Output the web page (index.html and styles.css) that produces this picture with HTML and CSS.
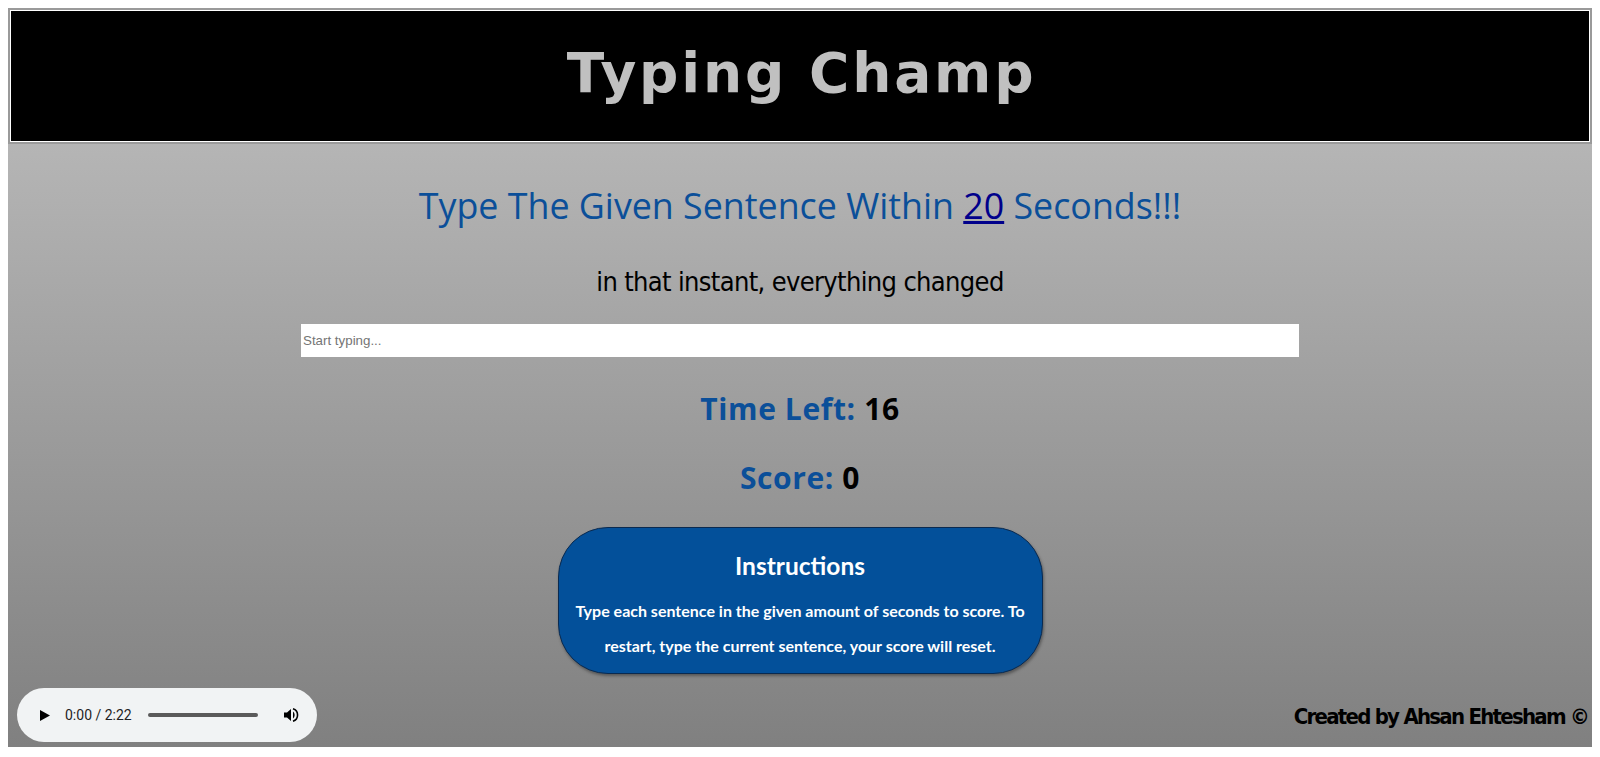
FILE: index.html
```html
<!DOCTYPE html>
<html lang="en">
<head>
<meta charset="utf-8">
<title>Typing Champ</title>
<link rel="stylesheet" href="styles.css">
</head>
<body>
<header class="top">
  <h1 class="brand">Typing Champ</h1>
</header>
<main class="stage">
  <h2 class="prompt">Type The Given Sentence Within <span class="secs">20</span> Seconds!!!</h2>
  <p class="sentence">in that instant, everything changed</p>
  <input class="entry" type="text" placeholder="Start typing...">
  <p class="stat stat-time"><span class="label">Time Left:</span> <span class="val">16</span></p>
  <p class="stat stat-score"><span class="label">Score:</span> <span class="val">0</span></p>
  <section class="instructions">
    <h3 class="ins-title">Instructions</h3>
    <p class="ins-text">Type each sentence in the given amount of seconds to score. To restart, type the current sentence, your score will reset.</p>
  </section>
  <div class="bottom">
    <div class="player">
      <svg class="play" width="10" height="11" viewBox="0 0 10 11"><path d="M0 0 L10 5.5 L0 11 Z" fill="#000"/></svg>
      <span class="time">0:00 / 2:22</span>
      <span class="track"></span>
      <svg class="vol" width="16" height="16" viewBox="0 0 16 16"><path d="M1 5.5 H4 L8 2 V14 L4 10.5 H1 Z" fill="#000"/><path d="M10 4.5 A4.5 4.5 0 0 1 10 11.5 Z" fill="#000"/><path d="M10 1.8 A6.5 6.5 0 0 1 10 14.2" fill="none" stroke="#000" stroke-width="1.6"/></svg>
    </div>
    <p class="credit">Created by Ahsan Ehtesham ©</p>
  </div>
</main>
</body>
</html>
```
FILE: styles.css
```css
html, body {
  margin: 0;
  padding: 0;
  background: #fff;
}
body {
  padding: 8px 8px 10px;
}
.top {
  height: 132px;
  border: 2px solid #9a9a9a;
  box-shadow: inset 0 0 0 1px #fff;
  background: #000;
  display: flex;
  align-items: center;
  justify-content: center;
}
.brand {
  margin: 0;
  font-family: "DejaVu Sans", sans-serif;
  font-weight: 700;
  font-size: 55px;
  color: #c0c0c0;
  letter-spacing: 2.8px;
  line-height: 1;
  padding: 0 0 6px 3px;
}
.stage {
  background: linear-gradient(#b5b5b5, #808080);
  display: flex;
  flex-direction: column;
  align-items: center;
  padding-bottom: 5px;
}
.prompt {
  margin: 36px 0 0;
  font-family: "Open Sans", "DejaVu Sans", sans-serif;
  font-weight: 400;
  font-size: 35.8px;
  line-height: 50px;
  color: #0b4f99;
}
.secs {
  color: #00008b;
  text-decoration: underline;
}
.sentence {
  margin: 32px 0 0;
  font-family: "DejaVu Sans", sans-serif;
  font-stretch: condensed;
  font-weight: 400;
  font-size: 27px;
  letter-spacing: -0.65px;
  line-height: 40px;
  color: #000;
}
.entry {
  margin: 22px 0 0;
  width: 998px;
  height: 33px;
  box-sizing: border-box;
  border: none;
  padding: 0 2px;
  background: #fff;
  font-family: "Liberation Sans", Arial, sans-serif;
  font-size: 13.33px;
  outline: none;
}
.entry::placeholder {
  color: #757575;
}
.stat {
  margin: 0;
  font-family: "Open Sans", "DejaVu Sans", sans-serif;
  font-weight: 700;
  font-size: 30px;
  letter-spacing: 0.6px;
  line-height: 40px;
}
.stat-time { margin-top: 32px; }
.stat-score { margin-top: 29px; }
.stat .label { color: #0b4f99; }
.stat .val { color: #000; }
.instructions {
  margin-top: 29px;
  width: 485px;
  height: 147px;
  box-sizing: border-box;
  background: #03509a;
  border: 1px solid #0a2a50;
  border-radius: 50px;
  box-shadow: 1px 2px 3px rgba(0,0,0,0.35);
  padding: 0 14px;
  text-align: center;
  color: #fff;
  font-family: "Lato", sans-serif;
}
.ins-title {
  margin: 23px 0 0;
  font-size: 24.5px;
  font-weight: 700;
  line-height: 30px;
}
.ins-text {
  margin: 12px 0 0;
  font-size: 16px;
  font-weight: 700;
  line-height: 35px;
}
.bottom {
  margin-top: 14px;
  align-self: stretch;
  display: flex;
  justify-content: space-between;
  align-items: flex-end;
  padding: 0 4px 0 9px;
}
.player {
  width: 300px;
  height: 54px;
  border-radius: 27px;
  background: #f1f3f4;
  display: flex;
  align-items: center;
  box-sizing: border-box;
  padding-left: 23px;
}
.play { flex: none; }
.time {
  margin-left: 15px;
  font-family: "Roboto", sans-serif;
  font-size: 14px;
  color: #1f1f1f;
}
.track {
  margin-left: 16px;
  width: 110px;
  height: 4px;
  border-radius: 2px;
  background: #5a5a5a;
}
.vol {
  margin-left: 25px;
}
.credit {
  margin: 0 0 13px;
  font-family: "DejaVu Sans", sans-serif;
  font-stretch: condensed;
  font-weight: 700;
  font-size: 22px;
  line-height: 24px;
  letter-spacing: -1.75px;
  color: #000;
}
```
